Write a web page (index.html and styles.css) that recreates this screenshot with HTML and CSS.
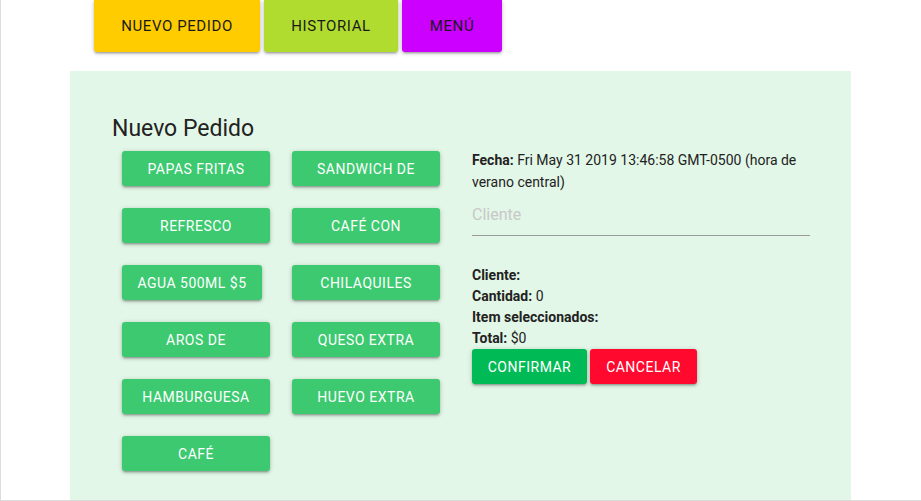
FILE: index.html
```html
<!DOCTYPE html>
<html lang="es">
<head>
<meta charset="utf-8">
<title>Nuevo Pedido</title>
<link rel="stylesheet" href="styles.css">
</head>
<body>
<div class="frame">
  <nav class="nav">
    <button class="nav-btn nav-yellow">NUEVO PEDIDO</button>
    <button class="nav-btn nav-lime">HISTORIAL</button>
    <button class="nav-btn nav-purple">MENÚ</button>
  </nav>
  <section class="panel">
    <h1 class="title">Nuevo Pedido</h1>
    <div class="content">
      <div class="items">
        <button class="item">PAPAS FRITAS</button>
        <button class="item">SANDWICH DE</button>
        <button class="item">REFRESCO</button>
        <button class="item">CAFÉ CON</button>
        <button class="item item-narrow">AGUA 500ML $5</button>
        <button class="item">CHILAQUILES</button>
        <button class="item">AROS DE</button>
        <button class="item">QUESO EXTRA</button>
        <button class="item">HAMBURGUESA</button>
        <button class="item">HUEVO EXTRA</button>
        <button class="item">CAFÉ</button>
      </div>
      <div class="order">
        <p class="date"><b>Fecha:</b> Fri May 31 2019 13:46:58 GMT-0500 (hora de verano central)</p>
        <input class="client-input" type="text" placeholder="Cliente">
        <div class="summary">
          <div><b>Cliente:</b></div>
          <div><b>Cantidad:</b> 0</div>
          <div><b>Item seleccionados:</b></div>
          <div><b>Total:</b> $0</div>
        </div>
        <div class="actions">
          <button class="act act-confirm">CONFIRMAR</button>
          <button class="act act-cancel">CANCELAR</button>
        </div>
      </div>
    </div>
  </section>
</div>
</body>
</html>
```

FILE: styles.css
```css
* { box-sizing: border-box; }
html, body { margin: 0; padding: 0; background: #fff; }
body { font-family: Roboto, "Liberation Sans", sans-serif; color: #212121; }

.frame {
  width: 921px;
  height: 501px;
  border-left: 1px solid #dcdcdc;
  border-bottom: 1px solid #dcdcdc;
  overflow: hidden;
}

.nav {
  display: flex;
  gap: 4px;
  padding-left: 93px;
  height: 52px;
}
.nav-btn {
  height: 52px;
  border: none;
  border-radius: 0 0 3px 3px;
  font-family: Roboto, "Liberation Sans", sans-serif;
  font-size: 15px;
  letter-spacing: 0.6px;
  color: #1a1a1a;
  box-shadow: 0 1px 5px rgba(0,0,0,.2), 0 2px 2px rgba(0,0,0,.14), 0 3px 1px -2px rgba(0,0,0,.12);
  padding: 0;
}
.nav-yellow { background: #ffcc00; width: 166px; }
.nav-lime { background: #b0dc30; width: 134px; }
.nav-purple { background: #cc00ff; width: 100px; }

.panel {
  margin: 19px 0 0 69px;
  width: 781px;
  height: 429px;
  background: #e2f7e7;
  padding: 44px 0 0 42px;
}
.title {
  margin: 0;
  font-size: 23px;
  font-weight: 400;
  line-height: 28px;
  color: #222;
}

.content {
  display: flex;
  gap: 32px;
  margin-top: 8px;
  padding-left: 10px;
}
.items {
  display: grid;
  grid-template-columns: 148px 148px;
  column-gap: 22px;
  row-gap: 22px;
  align-content: start;
  width: 318px;
}
.item {
  height: 35px;
  width: 148px;
  border: none;
  border-radius: 3px;
  background: #3cc96f;
  color: #fff;
  font-family: Roboto, "Liberation Sans", sans-serif;
  font-size: 14px;
  letter-spacing: 0.5px;
  box-shadow: 0 1px 5px rgba(0,0,0,.2), 0 2px 2px rgba(0,0,0,.14), 0 3px 1px -2px rgba(0,0,0,.12);
  padding: 0;
}
.item-narrow { width: 140px; }

.order {
  width: 338px;
  font-size: 14px;
  color: #222;
}
.date {
  margin: -2px 0 0;
  line-height: 22px;
}
.client-input {
  display: block;
  width: 338px;
  height: 33px;
  margin-top: 10px;
  border: none;
  border-bottom: 1px solid #9a9a9a;
  background: transparent;
  font-family: Roboto, "Liberation Sans", sans-serif;
  font-size: 16px;
  padding: 0 0 10px;
  outline: none;
}
.client-input::placeholder { color: #c8c8c8; }
.summary {
  margin-top: 29px;
  line-height: 21px;
}
.summary b { font-weight: 700; }
.actions {
  display: flex;
  gap: 3px;
  margin-top: 0;
}
.act {
  height: 35px;
  border: none;
  border-radius: 3px;
  color: #fff;
  font-family: Roboto, "Liberation Sans", sans-serif;
  font-size: 14px;
  letter-spacing: 0.5px;
  box-shadow: 0 1px 5px rgba(0,0,0,.2), 0 2px 2px rgba(0,0,0,.14), 0 3px 1px -2px rgba(0,0,0,.12);
  padding: 0;
}
.act-confirm { background: #00bb55; width: 115px; }
.act-cancel { background: #ff0a2e; width: 107px; }
```
